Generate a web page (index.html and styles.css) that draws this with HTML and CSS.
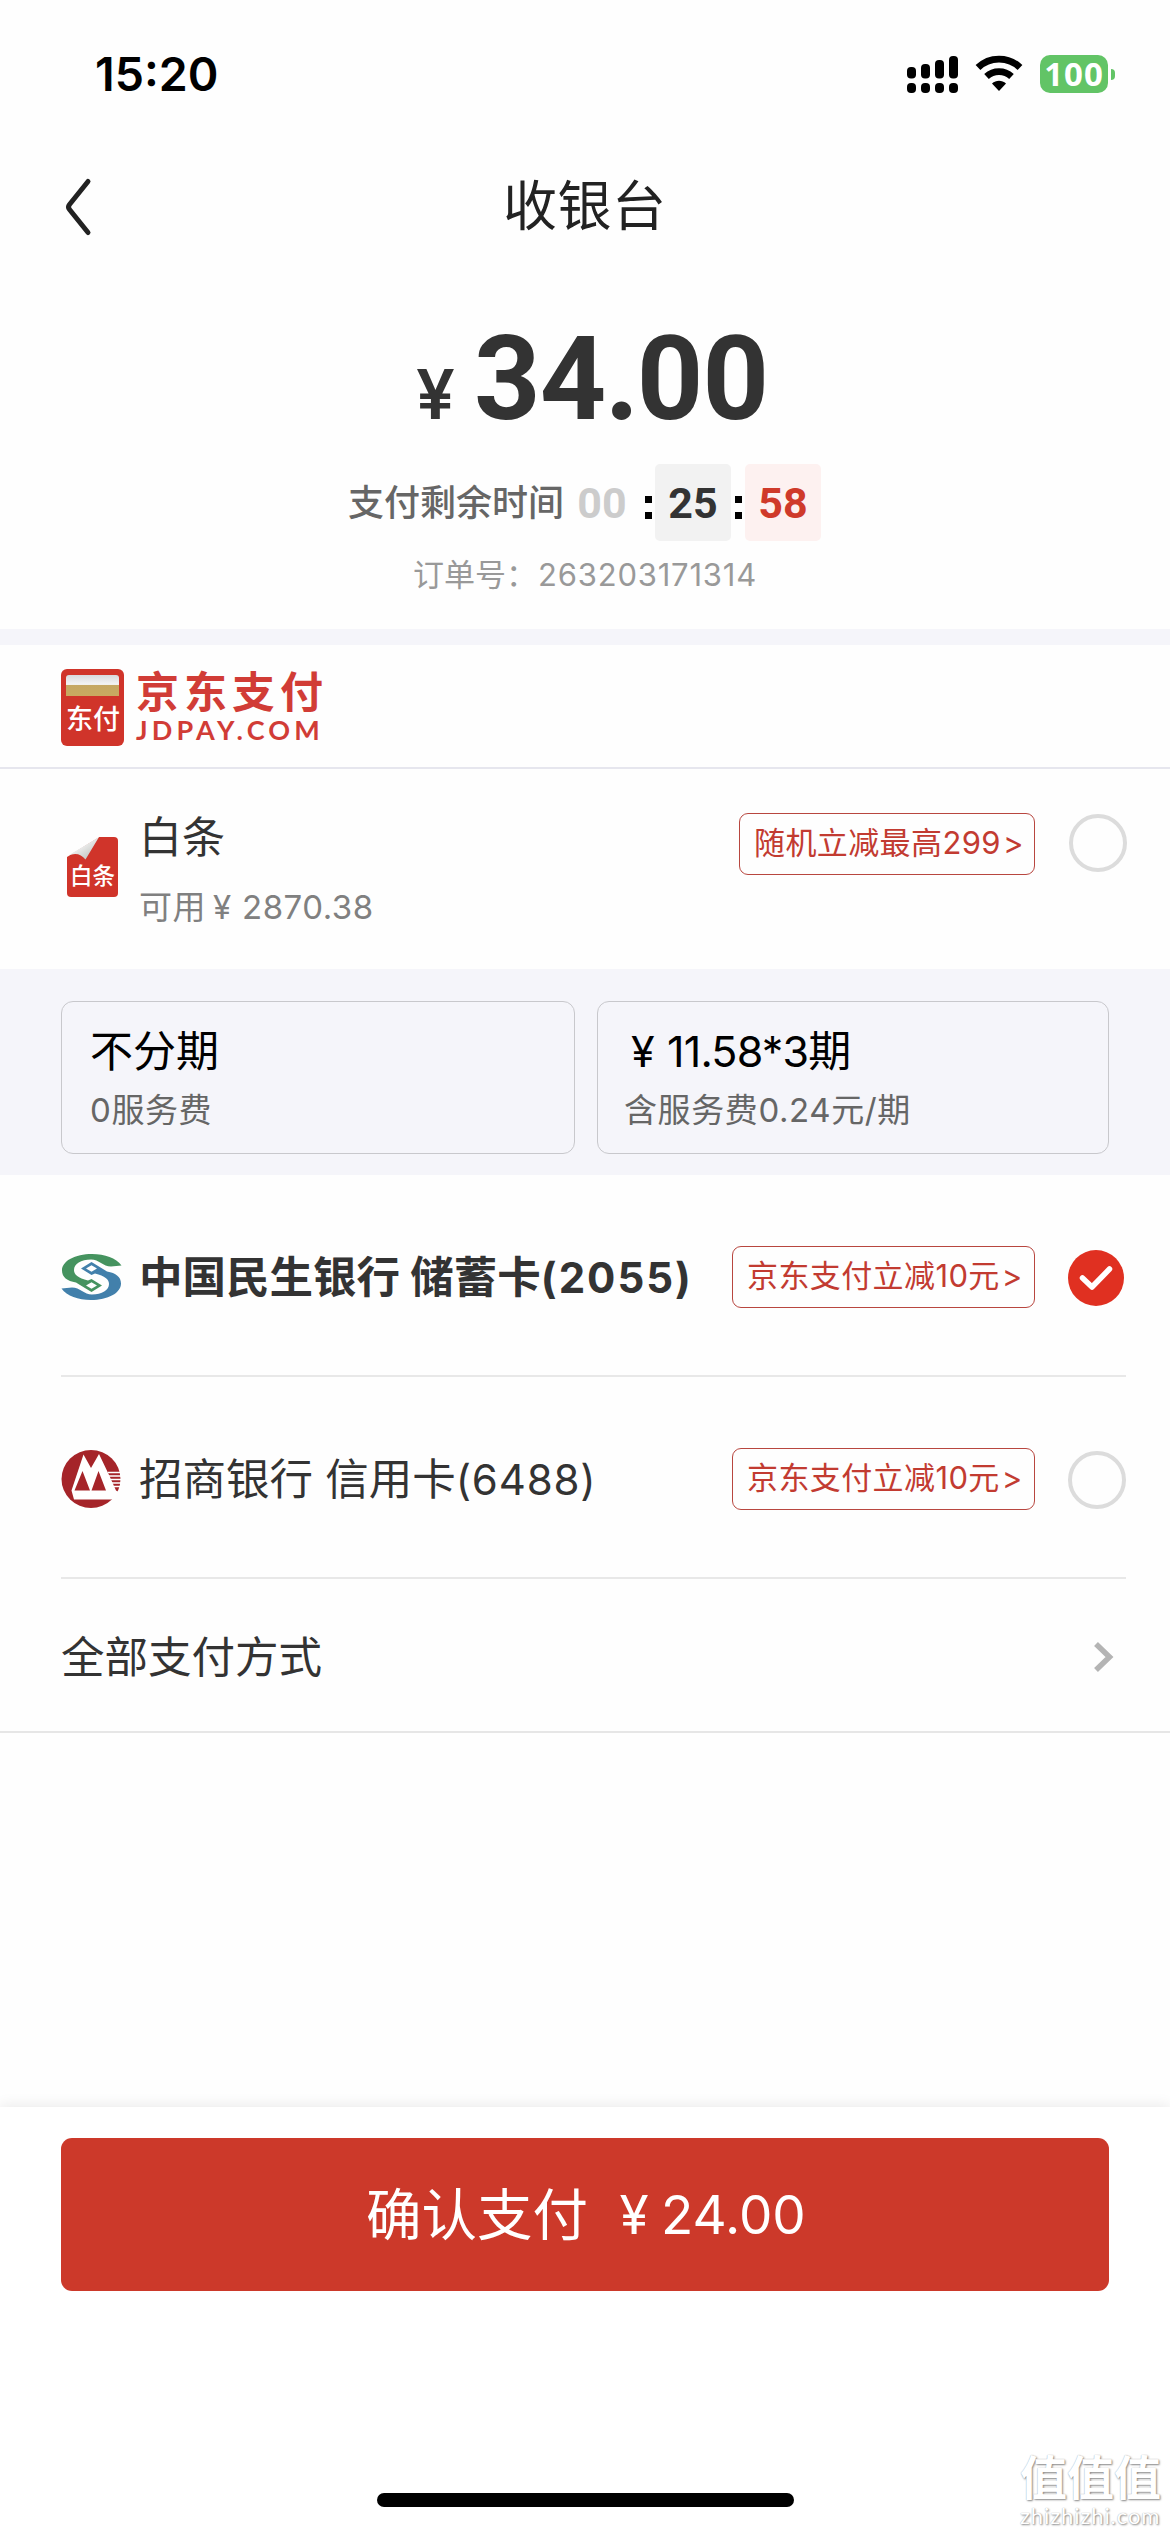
FILE: index.html
```html
<!DOCTYPE html>
<html lang="zh-CN">
<head>
<meta charset="utf-8">
<title>收银台</title>
<link rel="stylesheet" href="styles.css">
</head>
<body>
<div class="status">
  <span class="clock">15:20</span>
  <svg class="signal" width="51" height="38" viewBox="0 0 51 38">
    <rect x="0" y="11" width="9" height="11.500" rx="4"/><rect x="14" y="8" width="9" height="14.500" rx="4"/><rect x="28" y="4" width="9" height="18.500" rx="4"/><rect x="42" y="0" width="9" height="22.500" rx="4"/>
    <rect x="0" y="27" width="9" height="10" rx="4"/><rect x="14" y="27" width="9" height="10" rx="4"/><rect x="28" y="27" width="9" height="10" rx="4"/><rect x="42" y="27" width="9" height="10" rx="4"/>
  </svg>
  <svg class="wifi" width="48" height="36" viewBox="0 0 48 36">
    <path d="M3 12.500C14.500 1.200 33.500 1.200 45 12.500M11.500 21.500c7-6.400 18-6.400 25 0" fill="none" stroke="#000" stroke-width="6.800"/>
    <path d="M17 28.500c4-3.600 10-3.600 14 0L24 36z"/>
  </svg>
  <span class="battery">100</span>
  <span class="nub"></span>
</div>
<header class="nav">
  <svg class="back" width="28" height="62" viewBox="0 0 28 62"><path d="M24 5.500 5.500 28.500q-2 2.500 0 5L24 56.500" fill="none" stroke="#222" stroke-width="5" stroke-linecap="round"/></svg>
  <h1 class="title">收银台</h1>
</header>
<section class="summary">
  <div class="amount"><span class="yen">¥</span>34<span class="point">.</span>00</div>
  <div class="timer">
    <span class="timer-label">支付剩余时间</span>
    <span class="cell hours">00</span><span class="colon"></span><span class="cell minutes">25</span><span class="colon"></span><span class="cell seconds">58</span>
  </div>
  <div class="order">订单号：<span class="order-no">263203171314</span></div>
</section>
<div class="band"></div>
<section class="brand">
  <div class="card-logo"><i class="card-stripe"></i><span class="card-name">东付</span></div>
  <div class="wordmark"><span class="word-cn">京东支付</span><span class="word-en">JDPAY.COM</span></div>
</section>
<section class="baitiao">
  <div class="note">
    <svg class="note-shape" width="51" height="60" viewBox="0 0 51 60">
      <defs><linearGradient id="fold" x1="0" y1="0" x2="1" y2="1"><stop offset=".35" stop-color="#f4f4f4"/><stop offset="1" stop-color="#b0b4b0"/></linearGradient></defs>
      <path d="M32 0h15q4 0 4 4v52q0 4-4 4H4q-4 0-4-4V20z" fill="#d0342a"/>
      <path d="M32 0 1 18.500Q12 14 18.500 22.500z" fill="url(#fold)"/><path d="M32 0 0 19V0z" fill="#fefefe"/>
    </svg>
    <span class="note-name">白条</span>
  </div>
  <div class="bt-text"><span class="bt-title">白条</span><span class="bt-sub">可用<i class="bt-yen">¥</i>2870.38</span></div>
  <span class="coupon first">随机立减最高299<b class="gt">&gt;</b></span>
  <span class="radio"></span>
</section>
<section class="plans">
  <div class="plan"><span class="plan-title">不分期</span><span class="plan-fee">0服务费</span></div>
  <div class="plan second"><span class="plan-title sum"><i class="plan-yen">¥</i>11.58*3期</span><span class="plan-fee">含服务费0.24元/期</span></div>
</section>
<section class="banks">
  <div class="bank">
    <svg class="bank-logo" width="61" height="58" viewBox="0 -6 61 58">
      <defs><path id="half" fill-rule="evenodd" d="M60.500 11.500C55 4 44 0 31 0 14 0 1 7 1 16.500c0 6.500 5 10.500 14 12l4 2.500L30.500 38 41 31.500 30.500 25 27 26.500C17 24 13 20.500 13 16c0-6 7-10.500 17-10.500C38 5.500 42 12.500 50 12.500zM30.500 28.200l5.500 3.300-5.500 3.300-5.500-3.300z"/></defs>
      <use href="#half" fill="#45935f"/><use href="#half" fill="#4280ab" transform="rotate(180 30.500 23)"/>
    </svg>
    <span class="bank-name bold">中国民生银行 储蓄卡<em class="num">(2055)</em></span>
    <span class="coupon">京东支付立减10元<b class="gt">&gt;</b></span>
    <svg class="checked" width="56" height="56" viewBox="0 0 56 56"><circle cx="28" cy="28" r="28" fill="#e03021"/><path d="M14.500 28 24 37 41.500 19" fill="none" stroke="#fff" stroke-width="5.500" stroke-linecap="round" stroke-linejoin="round"/></svg>
  </div>
  <div class="bank">
    <svg class="bank-logo" width="61" height="58" viewBox="0 0 61 58">
      <ellipse cx="30" cy="29" rx="29.500" ry="29" fill="#a52429"/>
      <path d="M10.500 40.500 22.500 4.500 30 18 38 4l10.500 22L55 40.500 57.500 42 54.500 49.500H13z" fill="#fff"/>
      <path d="M13.500 40.500 21.500 21 29 40.500zM30.500 40.500 37.500 21l7.500 19.500z" fill="#a52429"/>
      <path d="M47 22.500h13M48 26h13M49.500 29.500H61M51 33h10M53 36.500h8" stroke="#fff" stroke-width="1.300"/>
    </svg>
    <span class="bank-name">招商银行 信用卡<em class="num">(6488)</em></span>
    <span class="coupon">京东支付立减10元<b class="gt">&gt;</b></span>
    <span class="radio"></span>
  </div>
</section>
<div class="all"><span>全部支付方式</span><svg width="22" height="34" viewBox="0 0 22 34"><path d="M4 4 17.500 17 4 30" fill="none" stroke="#b4b4b4" stroke-width="5.500"/></svg></div>
<footer class="footer">
  <button class="pay">确认支付<span class="pay-yen">¥</span><span class="pay-sum">24.00</span></button>
  <div class="bottom"><i class="home"></i></div>
  <div class="mark"><span class="mark-cn">值值值</span><span class="mark-en">zhizhizhi.com</span></div>
</footer>
</body>
</html>
```
FILE: styles.css
```css
* { box-sizing: border-box; }
i, em { font-style: normal; }
body {
  margin: 0;
  width: 1170px;
  height: 2532px;
  display: flex;
  flex-direction: column;
  overflow: hidden;
  background: #fefefe;
  color: #333;
  font-family: Inter, "Noto Sans CJK SC", sans-serif;
  font-weight: 380;
  white-space: nowrap;
}
.status { height: 150px; padding: 55px 55px 0 95px; display: flex; align-items: flex-start; }
.clock { margin-right: auto; font-size: 46.500px; line-height: 39px; font-weight: 600; color: #000; }
.signal { margin: 1px 17px 0 0; }
.wifi { margin-right: 17px; }
.battery { width: 68px; height: 38px; border-radius: 10px; background: #62c466; color: #fff; font: 700 33px/38px "Noto Sans", sans-serif; text-align: center; letter-spacing: 1px; }
.nub { width: 4px; height: 11px; margin: 14px 0 0 3px; border-radius: 0 5px 5px 0; background: #62c466; }
.nav { height: 114px; padding-left: 64px; display: flex; align-items: center; }
.back { width: 28px; }
.title { margin: 0 0 0 411px; font-size: 54px; line-height: 60px; font-weight: 380; color: #222; letter-spacing: 0.500px; }
.summary { height: 365px; padding-top: 53px; }
.amount { height: 116px; padding-left: 416px; display: flex; align-items: baseline; font: 700 116px/116px Roboto, sans-serif; letter-spacing: -0.700px; }
.yen { width: 58px; font: 600 69px/80px Inter, sans-serif; }
.point { width: 31px; font: 900 116px/116px Lato, sans-serif; text-align: center; }
.timer { height: 77px; margin-top: 31px; padding-left: 348px; display: flex; align-items: center; }
.timer-label { width: 229px; font-size: 36px; line-height: 40px; font-weight: 500; color: #666; }
.cell { width: 76px; height: 77px; border-radius: 5px; font: 700 43px/79px Roboto, sans-serif; text-align: center; }
.hours { width: 64px; padding-right: 14px; color: #ccc; }
.minutes { background: #f2f2f2; }
.seconds { background: #fdf1f0; color: #cf3a2a; }
.colon { width: 7px; height: 23px; margin: 10px 3px 0 4px; border: solid #000; border-width: 7px 0; }
.order { margin-top: 17px; padding-left: 413px; font-size: 31px; line-height: 34px; color: #999; }
.order-no { margin-left: 1px; font-size: 31px; letter-spacing: 0.800px; }
.band { height: 16px; background: #f5f5fa; }
.brand { height: 124px; padding: 24px 0 0 61px; display: flex; border-bottom: 2px solid #e6e6ee; }
.card-logo { width: 63px; height: 77px; padding: 6px 5px; border-radius: 6px; background: #d0342a; color: #fff; }
.card-stripe { display: block; height: 21px; border-radius: 3px 3px 0 0; background: linear-gradient(#d8d9dd, #f4f4f4 45%, #c5a763 50%, #c9a960); }
.card-name { display: block; margin-top: 10px; font-size: 27px; line-height: 28px; font-weight: 500; }
.wordmark { padding: 3px 0 0 12px; display: flex; flex-direction: column; color: #d13c36; }
.word-cn { font-size: 43px; line-height: 40px; font-weight: 700; letter-spacing: 5px; }
.word-en { margin-top: 4px; font: 700 27px/27px Lato, sans-serif; letter-spacing: 4.200px; }
.baitiao { height: 200px; padding: 43px 43px 0 67px; display: flex; align-items: flex-start; }
.note { position: relative; width: 51px; height: 60px; margin-top: 25px; }
.note-shape { display: block; }
.note-name { position: absolute; left: 3px; top: 27px; color: #fff; font-size: 22.500px; line-height: 24px; font-weight: 500; }
.bt-text { margin: 0 auto 0 21px; display: flex; flex-direction: column; }
.bt-title { font-size: 43px; line-height: 50px; }
.bt-sub { margin-top: 27px; font-size: 33px; line-height: 36px; color: #808080; letter-spacing: 0.500px; }
.bt-yen { display: inline-block; width: 36px; padding-left: 7px; }
.coupon { width: 303px; height: 62px; border: 1.500px solid #b8463f; border-radius: 9px; padding-left: 14px; font-size: 31px; line-height: 58px; color: #c23b31; letter-spacing: 0.400px; }
.coupon.first { width: 296px; margin-top: 1px; }
.gt { margin-left: 2px; font-weight: 400; }
.radio { flex: none; width: 58px; height: 58px; margin: 2px 0 0 34px; border: 4px solid #dcdcdc; border-radius: 50%; }
.plans { height: 206px; padding: 32px 61px 0; display: flex; gap: 22px; background: #f5f5fa; }
.plan { flex: 1; height: 153px; padding: 24px 0 0 28px; border: 1.500px solid #c8c8cc; border-radius: 12px; display: flex; flex-direction: column; }
.plan-title { font-size: 43px; line-height: 50px; color: #000; }
.plan-title.sum { letter-spacing: -0.800px; }
.plan-fee { margin-top: 15px; font-size: 33px; line-height: 38px; color: #666; letter-spacing: 0.600px; }
.second { padding-left: 26px; }
.plan-yen { display: inline-block; width: 43px; padding-left: 7px; }
.banks { padding: 0 44px 0 61px; }
.bank { height: 202px; display: flex; align-items: center; border-bottom: 2px solid #e8e8e8; }
.bank .radio { margin: 5px 0 0 33px; }
.bank-logo, .bank .coupon { margin-top: 4px; }
.bank-name { margin: 0 auto 2px 17px; font-size: 43.500px; }
.bank-name.bold { font-weight: 700; }
.num { font-size: 42px; letter-spacing: 0.800px; }
.bold .num { letter-spacing: 2px; }
.checked { margin: 5px 2px 0 33px; }
.all { height: 154px; padding: 0 56px 0 61px; display: flex; align-items: center; justify-content: space-between; font-size: 43.500px; border-bottom: 2px solid #e6e6e6; }
.all span { margin-bottom: 2px; }
.all svg { margin-top: 4px; }
.footer { position: relative; height: 425px; margin-top: auto; padding: 31px 61px 0; background: #fff; box-shadow: 0 -1px 14px rgba(0,0,0,.09); }
.pay { width: 100%; height: 153px; padding: 0 0 0 305px; display: flex; align-items: center; border: 0; border-radius: 11px; background: #cc392a; color: #fff; font: 380 55.500px/60px Inter, "Noto Sans CJK SC", sans-serif; }
.pay-yen { width: 54px; margin-left: 19px; font-size: 53px; }
.pay-sum { font-size: 53px; }
.bottom { margin-top: 202px; display: flex; justify-content: center; }
.home { width: 417px; height: 14px; border-radius: 7px; background: #000; }
.mark { position: absolute; right: 8px; bottom: 4px; width: 142px; color: #fff; text-shadow: 1px 1px 2px #888, 0 0 1px #aaa; display: flex; flex-direction: column; }
.mark-cn { font-size: 47px; line-height: 52px; font-weight: 700; }
.mark-en { font: 400 22px/24px Lato, sans-serif; letter-spacing: 0.900px; }
```
